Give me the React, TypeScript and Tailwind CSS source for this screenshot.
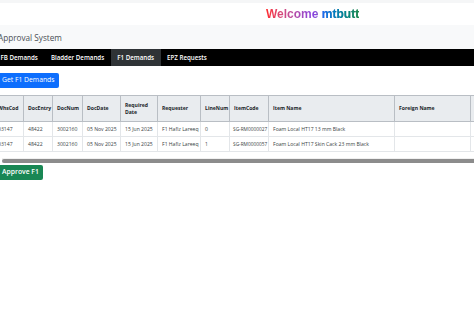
import React from 'react';

interface DemandRow {
  whsCode: string;
  docEntry: string;
  docNum: string;
  docDate: string;
  requiredDate: string;
  requester: string;
  lineNum: string;
  itemCode: string;
  itemName: string;
  foreignName: string;
}

const rows: DemandRow[] = [
  {
    whsCode: '03147',
    docEntry: '48422',
    docNum: '3002160',
    docDate: '05 Nov 2025',
    requiredDate: '15 Jun 2025',
    requester: 'F1 Hafiz Lareeq',
    lineNum: '0',
    itemCode: 'SG-RM0000027',
    itemName: 'Foam Local HT17 13 mm Black',
    foreignName: '',
  },
  {
    whsCode: '03147',
    docEntry: '48422',
    docNum: '3002160',
    docDate: '05 Nov 2025',
    requiredDate: '15 Jun 2025',
    requester: 'F1 Hafiz Lareeq',
    lineNum: '1',
    itemCode: 'SG-RM0000057',
    itemName: 'Foam Local HT17 Skin Cack 23 mm Black',
    foreignName: '',
  },
];

const navItems = ['FB Demands', 'Bladder Demands', 'F1 Demands', 'EPZ Requests'];

const App: React.FC = () => {
  const th = 'border border-[#b9bec4] bg-[#e9ecef] px-[4px] text-left align-middle font-bold text-[#212529]';
  const td = 'border border-[#e3e6e9] px-[4px] align-middle text-[#3a3f44] whitespace-nowrap overflow-hidden';

  return (
    <div className="w-[474px] h-[316px] overflow-hidden bg-white font-['Open_Sans',sans-serif]">
      {/* welcome strip */}
      <div className="h-[3px] bg-[#f5f6f7]" />
      <div className="h-[22px] flex items-center pl-[266px]">
        <span className="font-['Liberation_Sans',sans-serif] text-[12px] font-bold leading-none bg-gradient-to-r from-[#ff2a2a] via-[#8a3fe0] to-[#1e8a4a] bg-clip-text text-transparent">
          Welcome <span className="bg-gradient-to-r from-[#1b6ff5] to-[#1f8a4c] bg-clip-text text-transparent">mtbutt</span>
        </span>
      </div>

      {/* brand */}
      <div className="h-[24px] bg-[#f8f9fa] flex items-center pt-[2px] -ml-[2px]">
        <span className="text-[8.2px] text-[#4a4f55]">Approval System</span>
      </div>

      {/* nav */}
      <nav className="h-[17px] bg-black flex items-stretch -ml-[6px]">
        {navItems.map((item) => (
          <div
            key={item}
            className={`flex items-center px-[6.5px] text-[6.2px] font-semibold text-white ${
              item === 'F1 Demands' ? 'bg-[#2f3336]' : ''
            }`}
          >
            {item}
          </div>
        ))}
      </nav>

      <div className="-ml-[2px]">
        <button className="block mt-[7px] h-[15px] px-[4px] rounded-[2px] bg-[#0d6efd] text-white text-[6.8px] leading-none">
          Get F1 Demands
        </button>

        <div className="mt-[7px] -ml-[5px] overflow-hidden">
          <table className="table-fixed border-collapse text-[5.1px] leading-[1.25] w-[517px]">
            <colgroup>
              <col className="w-[30px]" />
              <col className="w-[29px]" />
              <col className="w-[30px]" />
              <col className="w-[38px]" />
              <col className="w-[37px]" />
              <col className="w-[43px]" />
              <col className="w-[29px]" />
              <col className="w-[39px]" />
              <col className="w-[126px]" />
              <col className="w-[76px]" />
              <col className="w-[40px]" />
            </colgroup>
            <thead>
              <tr className="h-[26px]">
                <th className={th}>WhsCod</th>
                <th className={th}>DocEntry</th>
                <th className={th}>DocNum</th>
                <th className={th}>DocDate</th>
                <th className={th}>
                  Required
                  <br />
                  Date
                </th>
                <th className={th}>Requester</th>
                <th className={th}>LineNum</th>
                <th className={th}>ItemCode</th>
                <th className={th}>Item Name</th>
                <th className={th}>Foreign Name</th>
                <th className={th}>UoM</th>
              </tr>
            </thead>
            <tbody>
              {rows.map((r) => (
                <tr key={r.lineNum} className="h-[15px]">
                  <td className={td}>{r.whsCode}</td>
                  <td className={td}>{r.docEntry}</td>
                  <td className={td}>{r.docNum}</td>
                  <td className={td}>{r.docDate}</td>
                  <td className={td}>{r.requiredDate}</td>
                  <td className={td}>{r.requester}</td>
                  <td className={td}>{r.lineNum}</td>
                  <td className={`${td} pl-[3px] pr-0 text-[4.8px]`}>{r.itemCode}</td>
                  <td className={td}>{r.itemName}</td>
                  <td className={td}>{r.foreignName}</td>
                  <td className={td}></td>
                </tr>
              ))}
            </tbody>
          </table>
        </div>

        {/* horizontal scrollbar */}
        <div className="mt-[6px] ml-[4px] h-[5px] bg-[#f0f0f0] flex items-end">
          <div className="h-[4px] w-full rounded-l-[2px] bg-[#8c8c8c]" />
        </div>

        <button className="block mt-[2px] h-[15px] px-[4px] rounded-[2px] bg-[#198754] text-white text-[6.8px] font-semibold leading-none">
          Approve F1
        </button>
      </div>
    </div>
  );
};

export default App;
